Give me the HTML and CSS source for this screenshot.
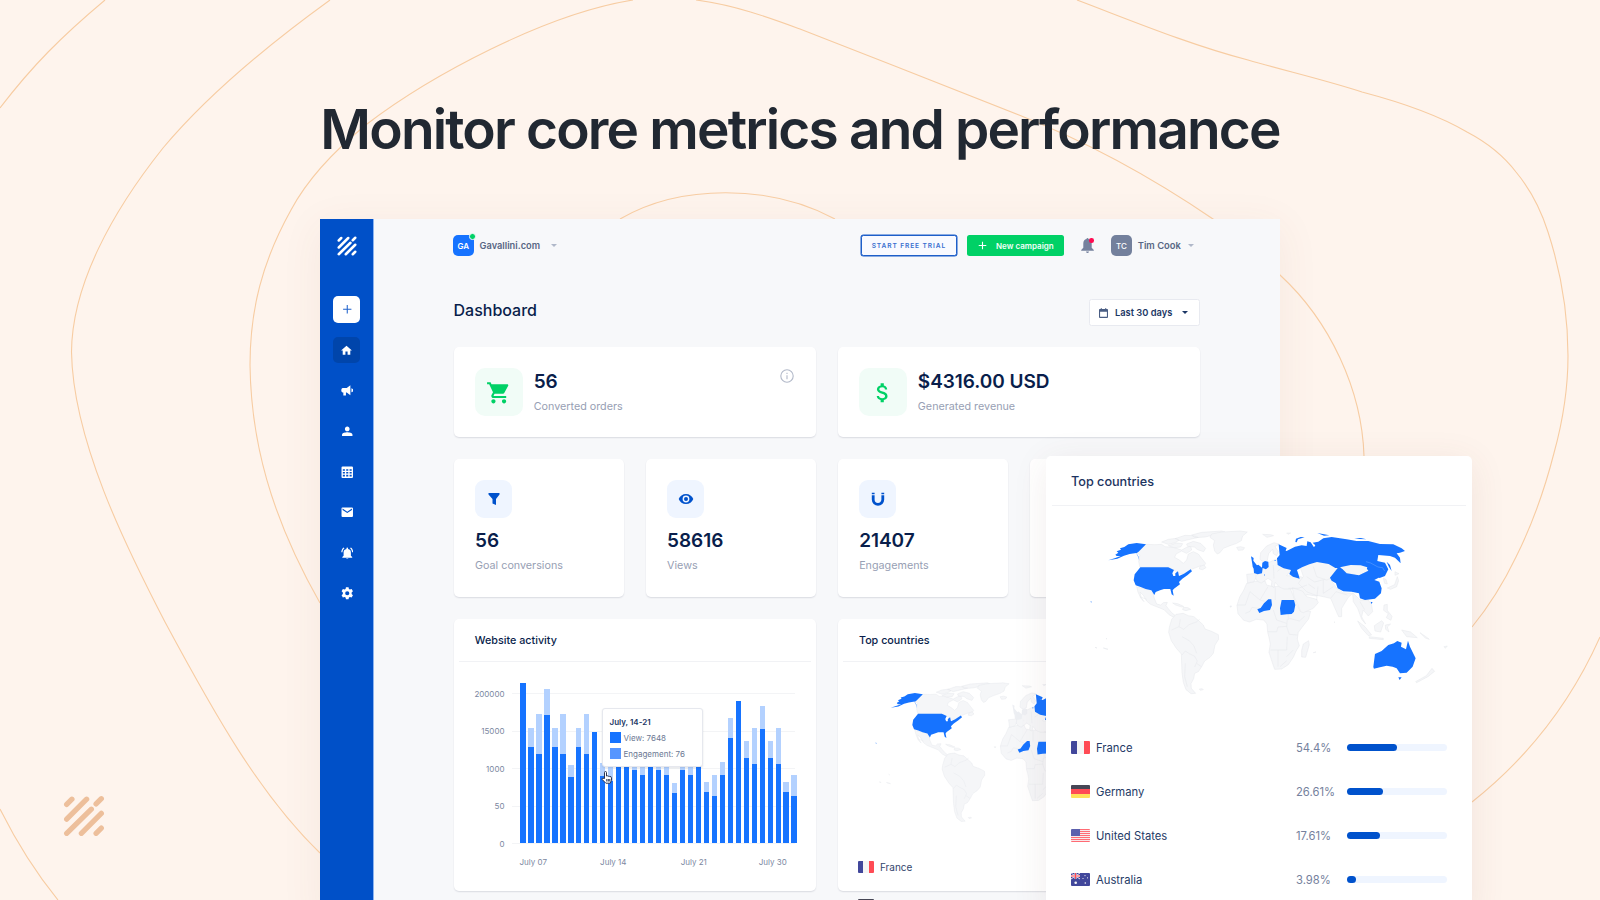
FILE: index.html
```html
<!DOCTYPE html>
<html lang="en">
<head>
<meta charset="utf-8">
<title>Monitor core metrics and performance</title>
<link rel="stylesheet" href="styles.css">
</head>
<body>
<svg class="defs" width="0" height="0">
  <symbol id="logo" viewBox="0 0 40 40">
    <path d="M3.500 9 8.500 4M3.500 23 22.500 4M3.500 36.500 27 13.500M31.500 8.500 36.500 3.500M17.500 36.500 36.500 17.500M31.500 36.500 36.500 31.500" fill="none" stroke="currentColor" stroke-width="5" stroke-linecap="round"/>
  </symbol>
  <symbol id="world" viewBox="90 240 1135 500">
    <g class="land">
      <path d="M318 283l27 1 20-1 10 7 25 2 25 8 15-8 12-4 3 12-15 10-15-7-17 9-4 10 14 8 12 10 10-10 5-18 15-7 15 7 10 13 12 15-7 10-10-2-10 4-15 6-20 12-15 2-15-10-20-10h-85l-4-17 2-13 2-7-10-7z"/>
      <path d="M365 276l20-8 24-3 8 6-12 7-20 5zM405 266l30-10 25 1 15 5-25 6-25 6zM455 255l30-8 60-4 10 3-25 7-35 8-30 2zM440 282l20-8 22 6 15 15-6 10-18-6-10-8-20-2zM385 287l25-8 18 2-6 10-20 2zM480 349l12-4 6 8-10 6-10-2zM590 292l12-2 12 3-5 7-14 1z"/>
      <path d="M515 252l30-6 55-3 22 3-14 12-4 14-14 8-20 7-20 8-10 13-8 4-8-9-4-18 4-13-14-10z"/>
      <path d="M290 410l25 7 15 3 10 12 3 13 7 17 12 3 8-7 12-1-4 10 7 9 10 12 10 8 10 2-10 6-18-10-15-15-15-6-25-10-12-10-10-17-10-10 3 15 9 14-10-11-8-18z"/>
      <path d="M398 459l15 2 18 8-6 2-18-6zM430 472l14 1 8 5-14 4-10-3z"/>
      <path d="M395 508l13-15 22-3 15 7 17 3 15 13 13 12 5 12 20 7 20 10 1 14-11 17-5 25-10 12-16 11-9 17-10 15-11 5-3 16-8 15 1 14 13 15-14 1-15-12-8-22-4-30-2-55-15-17-15-23-8-25 2-15zM478 717l9-1 3 3-9 2z"/>
      <path d="M620 400l30-7 25-1 5 13 20 5 25-2 25 5 7 17 11 30 12 22 32 2-6 23-16 20-15 20-3 20 6 20-10 17-8 18-15 22-20 13-21 1-7-20-10-31 4-25-4-20-4-15-2-25-10-12-22-2-20 8-18-5-17-20-3-25 8-25 12-20zM790 582l16-10 2 12-11 38-12-1v-20z"/>
      <path d="M620 373l28-3 5 7-12 18-18 4zM660 328l2-20 18-20 22-10 15 4-12 8 10 15-5 12-10-6-2-14-12 14-4 20-8 6-8-4zM668 253l25 1 8 3-20 5zM740 249l12 0-8 4z"/>
      <path d="M686 338l20-10 16 2 3 15 15 2 22 6-4 10-10 4-8 10 30 0 18 5 10 12 28-6-2 18 20 20-14 12-30-4-8 10-20-12-10-15-30 0-14-6-12-14-4 16-8-6 2-14-12-8-20 14-10-4-7-10 2-16z"/>
      <path d="M757 413l30 10 13 17 30 8 5 10-15 17-30 13-8-3-10-25-10-20z"/>
      <path d="M780 350l22-10 33-8 45 8 15 12-25 33 20 30 20 13 28 2-13 12-20 33v25h-9l-11-25-13-30-22-5-25-5-25-10-25-25 15-20-2-7zM900 348l35-4 50 6v12l-28 14-37-6z"/>
      <path d="M938 428l22 22 25 0 10 15 3 20-13 13-15-18-5 20 12 22-12-14-12-33-13-20zM953 513l22 17 20 25-10 2-20-22zM988 560l42 5v4l-42-4zM1003 527l22-15 6 7-9 27-17-3zM1036 525l16-3-10 9 5 15-10-8zM1085 540l27 6 20 17-32-3zM1032 465l10-2 0 18 14 18-3 12-14-8 6-12-14-10zM1140 548l18 12 10 8-12-4z"/>
      <path d="M1065 365l12 6-12 5zM1072 380l4 12-6 18-18 8-10-4 22-10zM1030 385l8 3 4 14-8-2zM1176 655l8 9-20 16-34 18-3-3 32-18zM1212 590l10-2-6 7z"/>
      <path class="bd" d="M300 440l20 8M395 540l22-10 14 8 16-14 22-8 10-8M417 530l4-22M426 560l22 12 14 16 8 22M426 615l10-12 12 8 16 8 8 14-8 18M436 640l-2 40 8 30M470 640l14 10M592 465h24l14-40M630 425l30 25 14 4M660 450l24-40M706 412v38M616 490l14-6 6-12 26 4M700 480l10 30 30 10M684 545h26l4-14 26-2 8 24 24 2M692 600h48l2-40M714 600v50M740 620l20-20M748 505l30 8 16-14M740 530l2-22M720 650l20-18M700 345l2 40M730 350l-18 14M745 415h30l26-10M800 380l24 16 30-8M820 350l10 30 30 10 20-8M830 450l4-40M850 390v40l30-20M805 402l20 14M872 445l16-20 34 10M960 455l14 24M745 490v20"/>
      <path d="M570 468l5 0-3 4zM198 565l3 2zM165 592l6 2zM190 594l14 4zM820 608l8-2zM882 516l3 1z"/>
    </g>
    <g class="hot">
      <path d="M301 352h84l17 8-5 10 3 8 6 0 0-8 8-6 3 14 15-7 20-13 4 6-14 12-15 10-10 10 3 7-18 13-4 5 3 16-6-4-4-16h-19l-12 4-13 5-4 9-9-14-17-4-15-6-15-5-6-15 3-18 8-10z"/>
      <path d="M318 283l-28-4-25 4-12 8-13 4 3 4-13 5 5 4-9 6 4 4 12 0-16 6-21 7 27-5 20-9 17-5 20-3 7 12 2 12-3-11-6-12 6-4zM152 452l3 4-2 2z"/>
      <path d="M716 283l24 11-3 8-9-2 12 3 25-13 20-4 15 2 2-14 10 3 10 15 4-6-8-8 17-3 15-10 25-4 45 7 30 5h35l35 9 40 1 25 12 10 8-15 5-10 2 10 13 2 17-17-17-15-5-35-3-3 18 23 5 10 20-10 20-16 6-30-20-15-12-40 1-48 1-20-12-35-6-23 7-22 9-15 8 5 15 3 11-20-6-11-8 5-12-22-5-18-10-2-20 8-10zM766 276l2-10 14-5 12 1-20 6-4 9zM832 249l12 2 24 5-16 1zM943 264l20 0 16 4-20-1zM1040 335l10 10 5 18-8-12z"/>
      <path d="M870 383l25-31 10 3 15 15 37 6 28-14-3-10 23-4 27 15-6 15-23 12 15 5 7 20-2 15-18 16-30 4-15-5-3-15-22-5-25-1-17-9-5-15-13-8zM992 455l6 2-4 5z"/>
      <path d="M1002 656l-2-5 5-39 20-9 20-18 17-5 10-7 13 5-2 12 15 8 6-26 6 18 17 35-9 25-18 18-20 2-10-15-12-5-18-3-20 5zM1075 682l10 0-6 8z"/>
      <path d="M652 478l10-4 10-14 13-12 9 0 2 17-6 15-18 3-14 6zM725 450h37l4 15-4 20-7 7-15 1-18 2-2-20zM702 331l6-1-2 3z"/>
      <path class="seam" d="M978 335l14 4 22 12 14 2 6 10"/>
      <path class="mongolia" d="M900 352l32-7 30 1 20 6-3 10-22 12-30-6z"/>
    </g>
    <path class="europe" d="M633 319l8 5-1 8 6 8 6 7-14 3-1-8zM638 350l17-6 13 11-2 15-13 3-11-4-1-13zM667 338l8-5 10 2 1 16-8 7-12-5zM672 373l3 1-1 5z"/>
  </symbol>
</svg>

<svg class="contours" viewBox="0 0 1600 900">
  <path d="M105 0C62 36 32 66 0 108"/>
  <path d="M330 0C265 47 205 98 163 148C112 212 72 285 71.500 352C73 440 125 545 165 622C215 715 260 795 320 853"/>
  <path d="M633 0C545 14 430 76 367 124C335 150 307 180 291 210C262 262 250 310 250 365C251 440 270 515 320 603"/>
  <path d="M696 0C735 5 770 18 800 29C870 56 955 90 1019 115C1085 141 1150 176 1213 219L1280 275C1330 321 1362 390 1364 456"/>
  <path d="M620 219C680 184 770 184 835 219"/>
  <path d="M1077 0C1130 20 1190 45 1248 60C1286 71 1325 80 1362 92C1400 102 1438 115 1467 132C1488 143 1503 155 1516 172C1531 190 1541 210 1548 232C1562 275 1568 315 1568 356C1568 392 1562 424 1554 453C1544 492 1532 525 1516 557C1504 582 1490 605 1472 627"/>
  <path d="M1600 637C1572 700 1530 756 1472 802"/>
  <path d="M0 809C18 845 36 873 58 900"/>
</svg>

<svg class="brand-mark"><use href="#logo"/></svg>

<h1 class="headline">Monitor core metrics and performance</h1>

<div class="window">
  <aside class="sidebar">
    <svg class="side-logo"><use href="#logo"/></svg>
    <nav class="side-nav">
      <a class="nav-item add"><svg viewBox="0 0 24 24"><path d="M11 4h2v7h7v2h-7v7h-2v-7H4v-2h7z"/></svg></a>
      <a class="nav-item active"><svg viewBox="0 0 24 24"><path d="M10 20v-6h4v6h5v-8h3L12 3 2 12h3v8z"/></svg></a>
      <a class="nav-item"><svg viewBox="0 0 24 24"><path d="M3 7.500q-2.500 1-2.500 4.500T3 16.500h1.500V22h5v-5.500h1.500l7 5V2.500L11 7.500zM20 8v8q3.500-1 3.500-4T20 8z"/></svg></a>
      <a class="nav-item"><svg viewBox="0 0 24 24"><path d="M12 12c2.500 0 4.500-2 4.500-4.500S14.500 3 12 3 7.500 5 7.500 7.500 9.500 12 12 12zm0 2c-3 0-10 1.300-10 4.500V21h20v-2.500c0-3.200-7-4.500-10-4.500z"/></svg></a>
      <a class="nav-item"><svg viewBox="0 0 24 24"><path fill-rule="evenodd" d="M3 1h18q2 0 2 2v18q0 2-2 2H3q-2 0-2-2V3q0-2 2-2zM3.500 6v3h4V6zM10 6v3h4V6zM16.500 6v3h4V6zM3.500 11.500v3h4v-3zM10 11.500v3h4v-3zM16.500 11.500v3h4v-3zM3.500 17v3h4v-3zM10 17v3h4v-3zM16.500 17v3h4v-3z"/></svg></a>
      <a class="nav-item"><svg viewBox="0 0 24 24"><path fill-rule="evenodd" d="M3 3h18q2 0 2 2v14q0 2-2 2H3q-2 0-2-2V5q0-2 2-2zm0 2v2.500l9 6 9-6V5l-9 6z"/></svg></a>
      <a class="nav-item"><svg viewBox="0 0 24 24"><path d="M6.600 2.600 5 1C2.500 2.800.8 6 .5 10h2.300c.2-3 1.600-5.600 3.800-7.400zM21.200 10h2.300c-.3-4-2-7.200-4.500-9l-1.600 1.600c2.200 1.800 3.600 4.400 3.800 7.400zM19 10.500c0-3.500-2-6-5.500-6.500V2.500a1.500 1.500 0 0 0-3 0V4C7 4.500 5 7 5 10.500V17l-2.500 2v1.500h19V19L19 17zM12 24c1.200 0 2-.8 2-2h-4c0 1.200.9 2 2 2z"/></svg></a>
      <a class="nav-item"><svg viewBox="0 0 24 24"><path fill-rule="evenodd" d="M9.500.500h5l.7 3.400 2 1.100 3.200-1 2.500 4.300-2.500 2.200v3l2.500 2.200-2.500 4.300-3.200-1-2 1.100-.7 3.400h-5l-.7-3.400-2-1.100-3.200 1-2.500-4.300 2.500-2.200v-3L1.100 8.300 3.600 4l3.200 1 2-1.100zM12 8a4 4 0 1 0 0 8 4 4 0 0 0 0-8z"/></svg></a>
    </nav>
  </aside>

  <main class="main">
    <header class="topbar">
      <div class="avatar site">GA<i class="dot"></i></div>
      <span class="site-name">Gavallini.com</span>
      <i class="caret pale"></i>
      <span class="spacer"></span>
      <button class="btn trial">START FREE TRIAL</button>
      <button class="btn create"><svg viewBox="0 0 10 10"><path d="M5 .800v8.400M.800 5h8.400"/></svg>New campaign</button>
      <div class="bell"><svg viewBox="0 0 13 15"><path d="M6.500 0q1 0 1 1 3.200.8 3.200 4.500v4.200L12.800 12v.8H.2V12l2.100-2.300V5.500Q2.300 1.800 5.500 1q0-1 1-1zM5 13.500h3q-.3 1.500-1.500 1.500T5 13.500z"/></svg><i class="alert"></i></div>
      <div class="avatar user">TC</div>
      <span class="user-name">Tim Cook</span>
      <i class="caret pale"></i>
    </header>

    <div class="title-row">
      <h2>Dashboard</h2>
      <div class="range"><svg viewBox="0 0 10 11"><path fill-rule="evenodd" d="M2 0h1v1h4V0h1v1h1q1 0 1 1v8q0 1-1 1H1q-1 0-1-1V2q0-1 1-1h1zM1.200 4v5.800h7.600V4z"/></svg><span>Last 30 days</span><i class="caret"></i></div>
    </div>

    <div class="grid">
      <section class="card wide">
        <div class="tile green"><svg viewBox="0 0 24 24"><path d="M7 18c-1.100 0-2 .9-2 2s.9 2 2 2 2-.9 2-2-.9-2-2-2zM1 2v2h2l3.600 7.600-1.400 2.500c-.2.300-.2.600-.2.900 0 1.100.9 2 2 2h12v-2H7.400c-.1 0-.2-.1-.2-.2v-.1l.9-1.700h7.500c.7 0 1.400-.4 1.700-1l3.600-6.500c.1-.2.100-.3.100-.5 0-.6-.4-1-1-1H5.200l-.9-2zm16 16c-1.100 0-2 .9-2 2s.9 2 2 2 2-.9 2-2-.9-2-2-2z"/></svg></div>
        <div class="stat"><strong>56</strong><span>Converted orders</span></div>
        <svg class="info" viewBox="0 0 14 14"><circle cx="7" cy="7" r="6.200"/><path d="M7 6.200v4M7 3.700v1.200"/></svg>
      </section>
      <section class="card wide">
        <div class="tile green"><svg viewBox="0 0 24 24"><path d="M11.800 10.900c-2.270-.59-3-1.200-3-2.150 0-1.090 1.010-1.850 2.700-1.850 1.780 0 2.440.85 2.500 2.100h2.210c-.07-1.720-1.120-3.300-3.210-3.810V3h-3v2.160c-1.940.42-3.500 1.680-3.500 3.610 0 2.310 1.910 3.460 4.700 4.130 2.500.6 3 1.480 3 2.410 0 .69-.49 1.790-2.700 1.790-2.060 0-2.870-.92-2.980-2.100h-2.200c.12 2.190 1.760 3.420 3.680 3.830V21h3v-2.150c1.950-.37 3.500-1.500 3.500-3.550 0-2.840-2.430-3.810-4.700-4.400z"/></svg></div>
        <div class="stat"><strong>$4316.00 USD</strong><span>Generated revenue</span></div>
      </section>

      <section class="card small">
        <div class="tile blue"><svg viewBox="0 0 16 16"><path d="M2.500 2h11v1.500L10 8v6L6.500 12.500V8l-4-4.500z"/></svg></div>
        <strong>56</strong><span>Goal conversions</span>
      </section>
      <section class="card small">
        <div class="tile blue"><svg viewBox="0 0 16 16"><path fill-rule="evenodd" d="M8 3C4.700 3 1.800 5 .7 8c1.100 3 4 5 7.300 5s6.200-2 7.300-5C14.200 5 11.300 3 8 3zm0 1.600a3.400 3.400 0 1 1 0 6.800 3.400 3.400 0 0 1 0-6.800zM8 6a2 2 0 1 0 0 4 2 2 0 0 0 0-4z"/></svg></div>
        <strong>58616</strong><span>Views</span>
      </section>
      <section class="card small">
        <div class="tile blue"><svg viewBox="0 0 16 16"><path d="M3.200 4.200V8.500a4.800 4.800 0 0 0 9.600 0V4.200M3.200 1.800V3.200M12.800 1.800V3.200" fill="none" stroke="#0052cc" stroke-width="2.800"/></svg></div>
        <strong>21407</strong><span>Engagements</span>
      </section>
      <section class="card small"></section>

      <section class="card panel">
        <h3>Website activity</h3>
        <div class="chart">
          <div class="ylabels"><span>200000</span><span>15000</span><span>1000</span><span>50</span><span>0</span></div>
          <div class="plot">
            <div class="lines"><i></i><i></i><i></i><i></i><i></i></div>
            <div class="bars" id="bars"></div>
            <div class="tooltip">
              <b>July, 14-21</b>
              <p><i class="key view"></i>View: 7648</p>
              <p><i class="key eng"></i>Engagement: 76</p>
            </div>
            <svg class="cursor" viewBox="0 0 12 13"><path d="M3.500 7.500V1.600q0-1.100 1-1.100t1 1.100V5q1.100-.6 1.600.3 1.100-.6 1.600.3 1.800-.4 1.800 1.200v2.400l-1.200 3H4.800L1 8.300q-.2-1.200 1-1.100z"/><path d="M5.800 8v2.500M7.300 8v2.500M8.800 8v2.500"/></svg>
          </div>
          <div class="xlabels"><span>July 07</span><span>July 14</span><span>July 21</span><span>July 30</span></div>
        </div>
      </section>
      <section class="card panel">
        <h3>Top countries</h3>
        <svg class="map plain"><use href="#world"/></svg>
        <ul class="countries">
          <li><i class="flag fr"></i>France</li>
          <li><i class="flag de"></i></li>
        </ul>
      </section>
    </div>
  </main>
</div>

<section class="overlay">
  <h3>Top countries</h3>
  <svg class="map"><use href="#world"/></svg>
  <ul class="countries">
    <li><i class="flag fr"></i><span class="name">France</span><span class="pct">54.4%</span><span class="track"><i style="width:50%"></i></span></li>
    <li><i class="flag de"></i><span class="name">Germany</span><span class="pct">26.61%</span><span class="track"><i style="width:36%"></i></span></li>
    <li><i class="flag us"></i><span class="name">United States</span><span class="pct">17.61%</span><span class="track"><i style="width:33%"></i></span></li>
    <li><svg class="flag" viewBox="0 0 19 13"><rect width="19" height="13" fill="#41479b"/><path d="M0 0 9 6M9 0 0 6" stroke="#e8e8f4"/><path d="M4.500 0v6M0 3h9" stroke="#f5f5f5" stroke-width="2"/><path d="M4.500 0v6M0 3h9" stroke="#ff4b55" stroke-width="1.100"/><g fill="#f5f5f5"><circle cx="4.700" cy="9.700" r="1.300"/><circle cx="14" cy="2.600" r=".6"/><circle cx="12" cy="5.500" r=".6"/><circle cx="16.500" cy="4.800" r=".6"/><circle cx="14.300" cy="10" r=".8"/></g></svg><span class="name">Australia</span><span class="pct">3.98%</span><span class="track"><i style="width:9%"></i></span></li>
  </ul>
</section>
<script src="script.js"></script>
</body>
</html>
```

FILE: styles.css
```css
* { box-sizing: border-box; }
html, body { height: 900px; overflow: hidden; }
body {
  margin: 0;
  position: relative;
  background: #fef4ed;
  font-family: Inter, "Liberation Sans", sans-serif;
  color: #091e4b;
}
h1, h2, h3, p, ul { margin: 0; padding: 0; }
ul { list-style: none; }
i { font-style: normal; }
.defs { position: absolute; }

.contours { position: absolute; left: 0; top: 0; width: 1600px; height: 900px; fill: none; stroke: #f7cca2; stroke-width: 1.100; }
.brand-mark { position: absolute; left: 63px; top: 795px; width: 42px; height: 42px; color: #edbf9b; }

.headline {
  position: relative;
  height: 219px;
  padding-top: 94px;
  text-align: center;
  font-size: 55px;
  line-height: 70px;
  font-weight: 600;
  letter-spacing: -1.840px;
  color: #212832;
  white-space: nowrap;
}

.window {
  position: relative;
  display: flex;
  width: 960px;
  height: 681px;
  margin: 0 auto;
  overflow: hidden;
  background: #f7f8fa;
}
body::before {
  content: "";
  position: absolute;
  left: 320px; top: 219px;
  width: 960px; height: 700px;
  box-shadow: 0 8px 40px rgba(130, 70, 50, .07);
}

.sidebar { width: 53.500px; padding-left: 1px; background: #0050c8; border-right: 1px solid #8cb4f0; display: flex; flex-direction: column; align-items: center; }
.side-logo { width: 20px; height: 20px; margin-top: 16.500px; color: #fff; }
.side-nav { margin-top: 40.700px; display: flex; flex-direction: column; gap: 14px; }
.nav-item { width: 26.600px; height: 26.600px; border-radius: 5px; display: grid; place-items: center; }
.nav-item svg { width: 12.500px; height: 12.500px; fill: #fff; }
.nav-item.add { background: #fff; }
.nav-item.add svg { fill: #1f62cc; }
.nav-item.active { background: #0045ab; }
.nav-item.active svg { width: 13px; height: 13px; }

.main { flex: 1; padding: 16px 79.700px 0 80px; }
.topbar { display: flex; align-items: center; height: 21.300px; margin-left: -.9px; font-size: 9.250px; font-weight: 600; color: #586784; }
.avatar { position: relative; width: 21.300px; height: 21.300px; border-radius: 5px; color: #fff; font-size: 8px; font-weight: 600; display: grid; place-items: center; }
.avatar.site { background: #1673ff; }
.avatar.user { background: #73809c; margin-right: 5.700px; font-weight: 500; }
.dot { position: absolute; right: -1.800px; top: -1.800px; width: 6.500px; height: 6.500px; border-radius: 50%; background: #00d166; border: .7px solid #f7f8fb; }
.site-name { margin: 0 11px 0 5.700px; }
.spacer { flex: 1; }
.caret { width: 0; height: 0; border: 3.800px solid transparent; border-top-color: #1c3765; border-bottom: 0; }
.caret.pale { border-top-color: #b0b8c9; }
.btn { height: 21.300px; width: 96.300px; padding: 0; border-radius: 2.500px; font-family: inherit; white-space: nowrap; }
.trial { border: 1.500px solid #1e5fc9; box-shadow: 0 0 0 .5px #1e5fc9; background: #f9faff; color: #3a70cf; font-size: 6.600px; font-weight: 600; letter-spacing: .9px; }
.create { margin-left: 10.400px; border: 0; background: #00d166; color: #f2fff8; font-size: 8px; font-weight: 600; display: flex; align-items: center; justify-content: center; gap: 9.500px; }
.create svg { width: 9px; height: 9px; stroke: #fff; fill: none; stroke-width: 1.200; }
.bell { position: relative; margin: 0 17px 0 17px; width: 13px; height: 15px; }
.bell svg { display: block; fill: #75819d; }
.alert { position: absolute; right: 0; top: 0; width: 4.600px; height: 4.600px; border-radius: 50%; background: #ff0a50; }
.user-name { margin-right: 7px; font-size: 9.400px; }
.topbar > .caret:last-child { margin-right: 6.500px; }

.title-row { display: flex; justify-content: space-between; margin-top: 43px; height: 47.700px; }
h2 { font-size: 16px; line-height: 22px; font-weight: 500; }
.range { height: 27px; width: 111.800px; padding: 0 11px 0 9.500px; display: flex; align-items: center; background: #fff; border: 1px solid #e8eaf0; border-radius: 2.500px; font-size: 9.300px; font-weight: 600; color: #1c3765; }
.range svg { width: 9px; height: 10px; margin-right: 7px; fill: #495d83; }
.range .caret { margin-left: auto; border-width: 3.500px 3.500px 0; }

.grid { display: grid; grid-template-columns: repeat(4, 1fr); gap: 21.500px; }
.card { background: #fff; border-radius: 5px; box-shadow: 0 1px 1.500px rgba(20, 30, 60, .13); }
.wide { grid-column: span 2; height: 90.500px; padding: 21.500px; display: flex; }
.tile { display: grid; place-items: center; }
.tile.green { width: 47.700px; height: 47.700px; border-radius: 10px; background: #f1fcf7; }
.tile.green svg { width: 25.500px; height: 25.500px; fill: #00d166; }
.tile.blue { width: 37.300px; height: 37.300px; border-radius: 9px; background: #eff5ff; }
.tile.blue svg { width: 16px; height: 16px; fill: #0052cc; }
.stat { margin-left: 11px; padding-top: .3px; flex: 1; }
.card strong { display: block; font-size: 19px; line-height: 26px; font-weight: 600; letter-spacing: -.05px; }
.card strong + span { display: block; font-size: 10.750px; line-height: 16px; color: #97a0b4; }
.stat strong + span { margin-top: 4.200px; }
.info { width: 14px; height: 14px; margin: 1px .5px 0 0; fill: none; stroke: #b2b9c9; stroke-width: 1.100; }
.small { height: 138.500px; padding: 21.500px; }
.small strong { margin-top: 10.500px; }
.small strong + span { margin-top: 4.200px; }

.panel { grid-column: span 2; height: 272px; }
.panel h3 { margin: 0 5px; padding: 0 16.300px; height: 43px; border-bottom: 1px solid #f1f2f5; font-size: 10.750px; line-height: 43.500px; font-weight: 500; }
.chart { display: grid; grid-template-columns: 51px 290px; padding-top: 20px; color: #7b879f; font-size: 8px; }
.ylabels { display: flex; flex-direction: column; justify-content: space-between; height: 162px; margin-top: 6px; text-align: right; line-height: 12px; }
.plot { position: relative; height: 161.300px; margin-left: 7px; }
.lines { display: flex; flex-direction: column; justify-content: space-between; height: 150.500px; margin-top: 11.500px; }
.lines i { height: 1px; background: #f3f4f6; }
.bars { position: absolute; left: 8.500px; right: 0; top: 0; bottom: 0; display: flex; align-items: flex-end; gap: 2.400px; }
.bar { flex: none; width: 5.600px; display: flex; align-items: flex-end; background: #b3d1ff; }
.bar i { width: 100%; background: #1673ff; }
.xlabels { grid-column: 1 / -1; margin: 6px 0 0 66px; display: flex; line-height: 13px; white-space: nowrap; }
.xlabels span { flex: none; width: 80.600px; }
.xlabels span:nth-child(3) { width: 78px; }
.xlabels span:nth-child(4) { width: auto; }
.tooltip { position: absolute; left: 90px; top: 26.300px; width: 101.500px; height: 59px; padding: 8px 7px; background: #fff; border: 1px solid #e6e8ee; border-radius: 3px; box-shadow: 0 1px 2px rgba(20, 30, 60, .12); white-space: nowrap; }
.tooltip b { display: block; font-size: 8px; line-height: 10px; font-weight: 600; color: #1c3765; }
.tooltip p { display: flex; align-items: center; height: 11px; margin-top: 5px; color: #6b7893; }
.key { width: 11px; height: 11px; margin-right: 3px; background: #1673ff; }
.key.eng { background: #5796ff; }
.cursor { position: absolute; left: 89px; top: 89px; width: 12px; height: 13px; fill: #fff; stroke: #2a3450; stroke-width: 1; }

.map { display: block; }
.land { fill: #f5f6f8; stroke: #e5e7eb; stroke-width: 1.500; }
.bd { fill: none; }
.hot { fill: #1673ff; }
.seam { fill: none; stroke: #6ea8ff; stroke-width: 1.500; }
.mongolia { fill: #f5f6f8; }
.europe { fill: var(--europe, #1673ff); }
.plain { --europe: #edeff3; width: 322.500px; height: 142px; margin: 20px 0 0 20px; }
.panel .countries { margin: 36.500px 0 0 20.500px; font-size: 10px; color: #33466d; }
.panel .countries li { display: flex; align-items: center; height: 13px; margin-bottom: 24.500px; gap: 5.500px; }
.panel .flag { width: 16.300px; height: 11.300px; }
.flag { width: 19px; height: 13px; border-radius: 1px; overflow: hidden; flex: none; }
.fr { background: linear-gradient(90deg, #41479b 33.300%, #f5f5f5 33.300% 66.600%, #ff4b55 66.600%); }
.de { background: linear-gradient(#464655 33.300%, #ff4b55 33.300% 66.600%, #ffe15a 66.600%); }
.us { background: linear-gradient(#5c60ad, #5c60ad) 0 0 / 9px 7px no-repeat, repeating-linear-gradient(#ff6b74 0 1px, #f8e8ea 1px 2px); }

.overlay { position: absolute; left: 1046px; top: 456px; width: 426px; height: 460px; background: #fff; border-radius: 5px 5px 0 0; box-shadow: 0 6px 36px rgba(110, 70, 50, .09); }
.overlay h3 { margin: 0 6px; padding: 0 19px; height: 50px; border-bottom: 1px solid #f1f2f5; font-size: 12.650px; line-height: 52px; font-weight: 500; color: #1c3360; }
.overlay .map { width: 378.300px; height: 166.700px; margin: 24px 0 0 24px; }
.overlay .countries { margin: 29px 0 0 25px; font-size: 11.250px; color: #253a66; }
.overlay li { display: flex; align-items: center; height: 44px; }
.name { width: 200px; margin-left: 6px; }
.pct { width: 51px; color: #75819d; }
.track { width: 100px; height: 6.600px; border-radius: 4px; background: #eff5ff; display: flex; }
.track i { border-radius: 4px; background: #0052cc; }
```

FILE: script.js
```js
// Heights in pixels: [total, views]
const days = [
  [160, 160], [115.700, 96], [129.700, 89.700], [154, 128], [115.700, 96], [129.700, 89.700], [78.700, 66],
  [115.700, 96], [129.700, 89.700], [111.700, 111.700], [80, 67], [77, 62], [90, 78], [90, 78],
  [90, 73], [90, 68], [90, 78], [90, 73], [90, 68], [60, 50], [90, 73], [90, 68], [90, 78],
  [61, 51], [68, 47], [81.700, 68], [125.700, 105], [142, 142], [102, 85.700], [115, 79.700],
  [137, 114], [102, 85.700], [115, 79.700], [61, 51], [68, 47]
];
document.getElementById("bars").innerHTML = days.map(([total, views]) =>
  `<div class="bar" style="height:${total}px"><i style="height:${views}px"></i></div>`).join("");
```
